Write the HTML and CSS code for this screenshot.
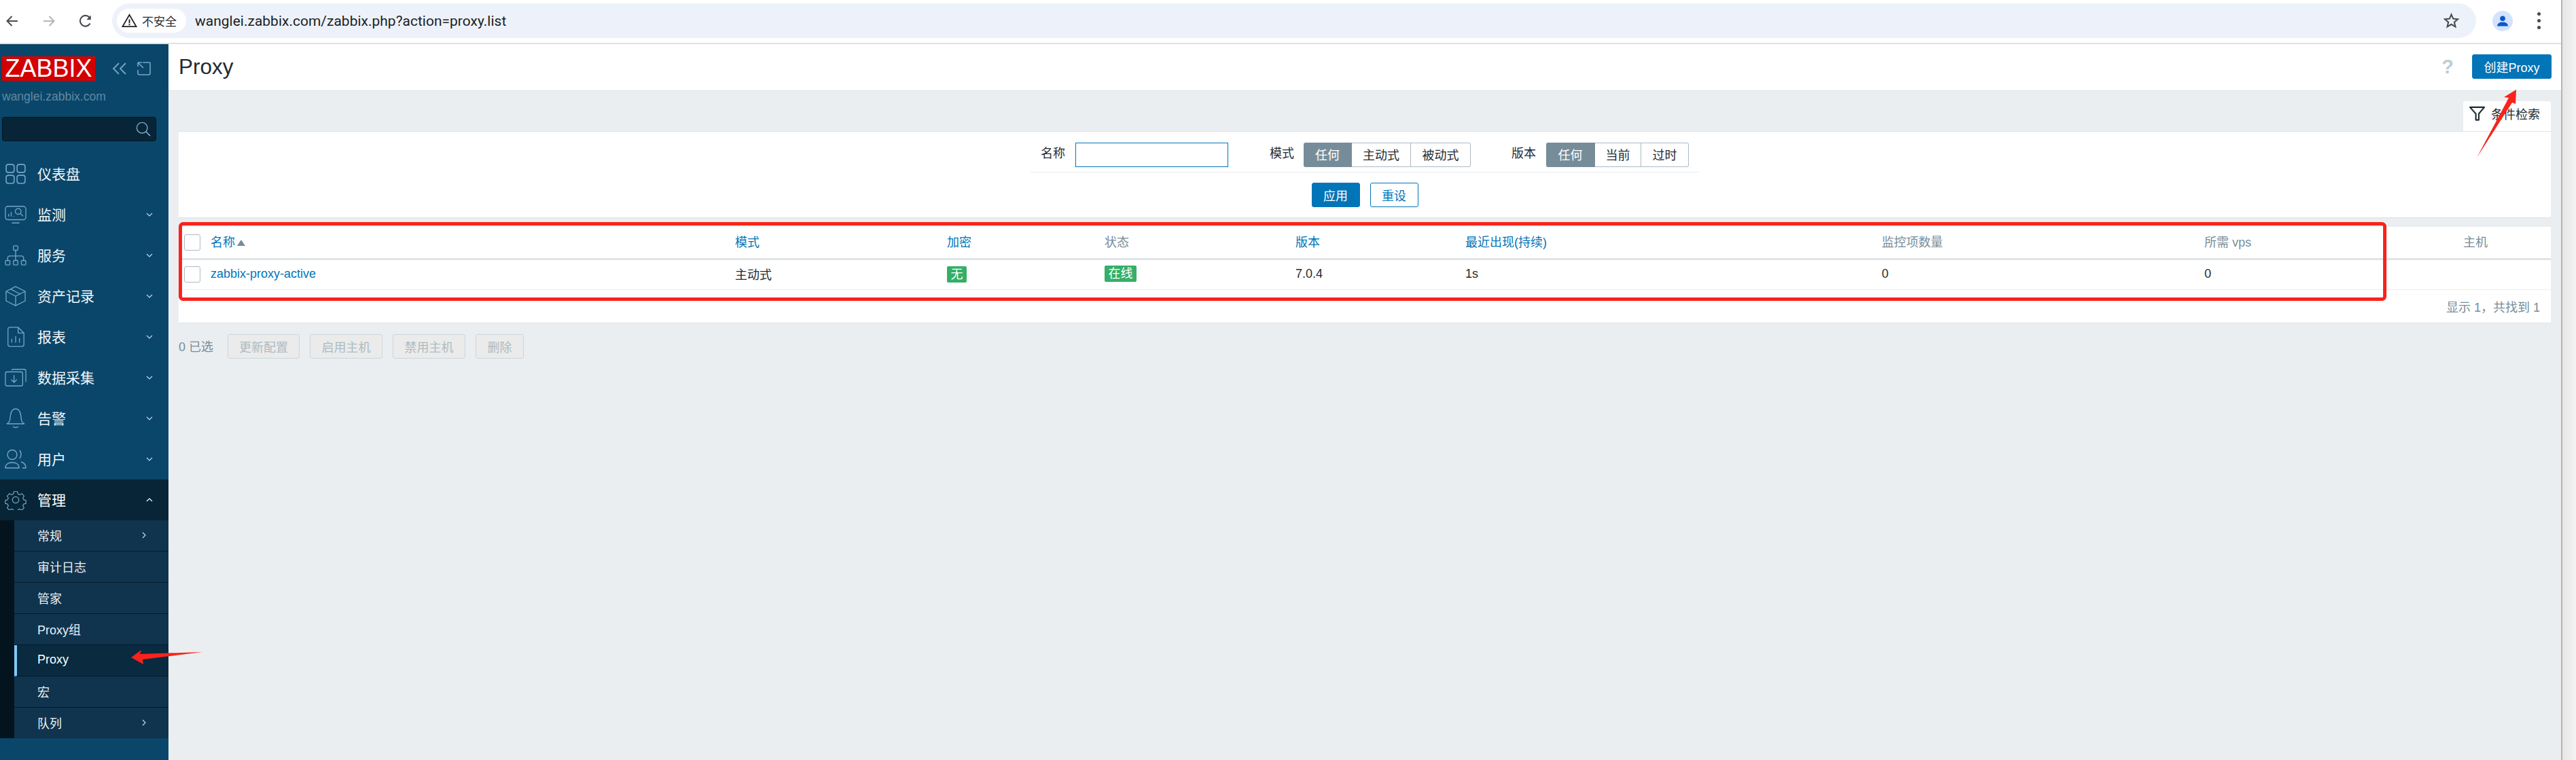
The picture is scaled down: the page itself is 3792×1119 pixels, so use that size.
FILE: index.html
```html
<!DOCTYPE html>
<html lang="zh">
<head>
<meta charset="utf-8">
<title>Proxy</title>
<link rel="stylesheet" href="styles.css">
</head>
<body>
<div class="window">
  <header class="toolbar">
    <svg class="tb-icon" viewBox="0 0 24 24"><path d="M20 12H5M11.5 5 4.5 12l7 7" fill="none" stroke="#484b4f" stroke-width="2"/></svg>
    <svg class="tb-icon tb-off" viewBox="0 0 24 24"><path d="M4 12h15M12.500 5l7 7-7 7" fill="none" stroke="#b3b5b7" stroke-width="2"/></svg>
    <svg class="tb-icon" viewBox="0 0 24 24"><path d="M18.600 15.500A7.800 7.800 0 1 1 17.500 6.500" fill="none" stroke="#484b4f" stroke-width="2.200"/><path d="M19.800 3.500v6.500h-6.500z" fill="#484b4f"/></svg>
    <div class="omnibox">
      <div class="chip">
        <svg class="warn" viewBox="0 0 24 24"><path d="M12 3 22.500 21h-21z" fill="none" stroke="#222" stroke-width="2"/><path d="M11 10h2v6h-2zM11 17h2v2h-2z" fill="#222"/></svg>
        <span>不安全</span>
      </div>
      <span class="url">wanglei.zabbix.com/zabbix.php?action=proxy.list</span>
      <svg class="star" viewBox="0 0 24 24"><path d="M12 3.200l2.600 6 6.500.6-4.900 4.300 1.500 6.400L12 17.100l-5.700 3.400 1.500-6.400-4.900-4.300 6.500-.6z" fill="none" stroke="#484b4f" stroke-width="2"/></svg>
    </div>
    <div class="avatar"><svg viewBox="0 0 24 24"><circle cx="12" cy="7.500" r="4.600" fill="#0b57d0"/><path d="M2.500 21c0-5 4.500-7.200 9.500-7.200s9.500 2.200 9.500 7.200z" fill="#0b57d0"/></svg></div>
    <div class="kebab"><i></i><i></i><i></i></div>
  </header>

  <div class="app">
    <aside class="sidebar">
      <div class="brand">
        <span class="logo">ZABBIX</span>
        <svg class="brand-a" viewBox="0 0 22 18"><path d="M10 1 2 9l8 8M20 1l-8 8 8 8" fill="none" stroke="#76a6c4" stroke-width="1.800"/></svg>
        <svg class="brand-b" viewBox="0 0 20 20"><path d="M8 1h10a1 1 0 0 1 1 1v15a2 2 0 0 1-2 2H3a2 2 0 0 1-2-2v-5M1 1l8 8M1 1v6M1 1h6" fill="none" stroke="#76a6c4" stroke-width="1.600"/></svg>
      </div>
      <div class="host">wanglei.zabbix.com</div>
      <div class="search">
        <svg viewBox="0 0 24 24"><circle cx="10" cy="10" r="8.500" fill="none" stroke="#76a6c4" stroke-width="1.600"/><path d="m16 16 7 7" stroke="#76a6c4" stroke-width="1.800"/></svg>
      </div>
      <nav class="menu">
        <a class="item"><span class="ic"><svg viewBox="0 0 28 28"><g fill="none" stroke="#76a6c4" stroke-width="1.500"><rect x="1" y="1" width="11" height="11" rx="3"/><rect x="16" y="1" width="11" height="11" rx="3"/><rect x="1" y="16" width="11" height="11" rx="3"/><rect x="16" y="16" width="11" height="11" rx="3"/></g></svg></span><span class="lbl">仪表盘</span></a>
        <a class="item"><span class="ic"><svg viewBox="0 0 34 28"><g fill="none" stroke="#76a6c4" stroke-width="1.400"><rect x="1" y="1" width="32" height="21" rx="4"/><path d="M11 27h12M6 17v-4M10 17v-7M14 17v-1"/><circle cx="21" cy="9" r="4.500"/><path d="m24.500 12.500 4 4"/></g></svg></span><span class="lbl">监测</span><svg class="chev" viewBox="0 0 10 6"><path d="m1 1 4 4 4-4" fill="none" stroke="#c5d9e6" stroke-width="1.200"/></svg></a>
        <a class="item"><span class="ic"><svg viewBox="0 0 34 32"><g fill="none" stroke="#76a6c4" stroke-width="1.400"><rect x="13.500" y="1" width="7" height="7" rx="1.500"/><rect x="1" y="24" width="7" height="7" rx="1.500"/><rect x="13.500" y="24" width="7" height="7" rx="1.500"/><rect x="26" y="24" width="7" height="7" rx="1.500"/><path d="M17 8v16M4.500 24v-4a3 3 0 0 1 3-3h19a3 3 0 0 1 3 3v4"/></g></svg></span><span class="lbl">服务</span><svg class="chev" viewBox="0 0 10 6"><path d="m1 1 4 4 4-4" fill="none" stroke="#c5d9e6" stroke-width="1.200"/></svg></a>
        <a class="item"><span class="ic"><svg viewBox="0 0 32 32"><g fill="none" stroke="#76a6c4" stroke-width="1.400" stroke-linejoin="round"><path d="M16 1 31 8.500v15L16 31 1 23.500v-15z"/><path d="M1 8.500 16 16l15-7.500M16 16v15M8 5l15 7.500"/></g></svg></span><span class="lbl">资产记录</span><svg class="chev" viewBox="0 0 10 6"><path d="m1 1 4 4 4-4" fill="none" stroke="#c5d9e6" stroke-width="1.200"/></svg></a>
        <a class="item"><span class="ic"><svg viewBox="0 0 28 32"><g fill="none" stroke="#76a6c4" stroke-width="1.400"><path d="M5 1h13l9 9v18a3 3 0 0 1-3 3H5a3 3 0 0 1-3-3V4a3 3 0 0 1 3-3zM18 1v9h9M8 25v-6M14 25V15M20 25v-7"/></g></svg></span><span class="lbl">报表</span><svg class="chev" viewBox="0 0 10 6"><path d="m1 1 4 4 4-4" fill="none" stroke="#c5d9e6" stroke-width="1.200"/></svg></a>
        <a class="item"><span class="ic"><svg viewBox="0 0 34 28"><g fill="none" stroke="#76a6c4" stroke-width="1.400"><rect x="1" y="5" width="27" height="22" rx="2.500"/><path d="M11 2.500q0-1.500 2-1.500h17q3 0 3 3v17M14.500 10v11M10 17l4.500 4.500L19 17"/></g></svg></span><span class="lbl">数据采集</span><svg class="chev" viewBox="0 0 10 6"><path d="m1 1 4 4 4-4" fill="none" stroke="#c5d9e6" stroke-width="1.200"/></svg></a>
        <a class="item"><span class="ic"><svg viewBox="0 0 28 30"><g fill="none" stroke="#76a6c4" stroke-width="1.400"><path d="M1 23q4-2 4.500-6l1-7C7.500 4 10 1 14 1s6.500 3 7.500 9l1 7q.5 4 4.500 6zM10 27q4 3 8 0"/></g></svg></span><span class="lbl">告警</span><svg class="chev" viewBox="0 0 10 6"><path d="m1 1 4 4 4-4" fill="none" stroke="#c5d9e6" stroke-width="1.200"/></svg></a>
        <a class="item"><span class="ic"><svg viewBox="0 0 32 30"><g fill="none" stroke="#76a6c4" stroke-width="1.400"><circle cx="11" cy="8.500" r="7"/><path d="M1 28c0-5 4-8 10-8s10 3 10 8zM22 2q4 6 0 12M24 19q7 2 7 9h-5"/></g></svg></span><span class="lbl">用户</span><svg class="chev" viewBox="0 0 10 6"><path d="m1 1 4 4 4-4" fill="none" stroke="#c5d9e6" stroke-width="1.200"/></svg></a>
        <a class="item item-open"><span class="ic"><svg viewBox="0 0 32 32"><g fill="none" stroke="#76a6c4" stroke-width="1.400" stroke-linejoin="round"><circle cx="16" cy="16" r="5"/><path d="M13 1.500h6l1 4 3 1.500 3.700-2 4 4.300-2 3.500 1.300 3 4 1v5.500l-4 1-1.300 3 2 3.600-4 4-3.700-2-3 1.300-1 3.800h-6l-1-3.800-3-1.300-3.700 2-4-4 2-3.600-1.300-3-4-1v-5.500l4-1 1.300-3-2-3.500 4-4.300 3.700 2 3-1.500z" transform="translate(1.600 1.600) scale(.9)"/></g></svg></span><span class="lbl">管理</span><svg class="chev" viewBox="0 0 10 6"><path d="m1 5 4-4 4 4" fill="none" stroke="#fff" stroke-width="1.200"/></svg></a>
      </nav>
      <div class="sub-wrap">
        <ul class="sub">
          <li class="sub-item">常规<svg class="chev-r" viewBox="0 0 6 10"><path d="m1 1 4 4-4 4" fill="none" stroke="#c5d9e6" stroke-width="1.200"/></svg></li>
          <li class="sub-item">审计日志</li>
          <li class="sub-item">管家</li>
          <li class="sub-item">Proxy组</li>
          <li class="sub-item sub-active">Proxy</li>
          <li class="sub-item">宏</li>
          <li class="sub-item">队列<svg class="chev-r" viewBox="0 0 6 10"><path d="m1 1 4 4-4 4" fill="none" stroke="#c5d9e6" stroke-width="1.200"/></svg></li>
        </ul>
      </div>
    </aside>

    <main class="main">
      <div class="page-head">
        <h1>Proxy</h1>
        <span class="help">?</span>
        <button class="btn btn-primary btn-create">创建Proxy</button>
      </div>
      <div class="content">
        <div class="tab-row">
          <div class="filter-tab">
            <svg viewBox="0 0 26 24"><path d="M2 2h22l-8.500 10v9.500h-4.500V12z" fill="none" stroke="#1f2c33" stroke-width="2.200" stroke-linejoin="round"/></svg>
            <span>条件检索</span>
          </div>
        </div>
        <section class="filter">
          <div class="filter-row">
            <label class="f-label f-name">名称</label>
            <span class="f-input"></span>
            <label class="f-label f-mode">模式</label>
            <div class="seg"><span class="seg-on w71">任何</span><span class="w87">主动式</span><span class="w88">被动式</span></div>
            <label class="f-label f-ver">版本</label>
            <div class="seg"><span class="seg-on w72">任何</span><span class="w68">当前</span><span class="w70">过时</span></div>
          </div>
          <div class="filter-actions">
            <button class="btn btn-primary btn-apply">应用</button>
            <button class="btn btn-outline btn-apply">重设</button>
          </div>
        </section>

        <section class="list">
          <table>
            <colgroup>
              <col class="c0"><col class="c1"><col class="c2"><col class="c3"><col class="c4"><col class="c5"><col class="c6"><col class="c7"><col class="c8"><col class="c9">
            </colgroup>
            <thead>
              <tr>
                <th class="cell-check"><span class="check"></span></th>
                <th><a>名称</a><i class="sort"></i></th>
                <th><a>模式</a></th>
                <th><a>加密</a></th>
                <th>状态</th>
                <th><a>版本</a></th>
                <th><a>最近出现(持续)</a></th>
                <th>监控项数量</th>
                <th>所需 vps</th>
                <th>主机</th>
              </tr>
            </thead>
            <tbody>
              <tr>
                <td class="cell-check"><span class="check"></span></td>
                <td><a>zabbix-proxy-active</a></td>
                <td>主动式</td>
                <td><span class="badge">无</span></td>
                <td><span class="badge badge-up">在线</span></td>
                <td>7.0.4</td>
                <td>1s</td>
                <td>0</td>
                <td>0</td>
                <td></td>
              </tr>
            </tbody>
          </table>
          <div class="list-foot">显示 1，共找到 1</div>
        </section>

        <div class="actions">
          <span class="selected">0 已选</span>
          <button class="btn-off w106">更新配置</button>
          <button class="btn-off w107">启用主机</button>
          <button class="btn-off w107">禁用主机</button>
          <button class="btn-off w71b">删除</button>
        </div>
      </div>
    </main>
  </div>
</div>
<div class="scrollbar"></div>

<svg class="annot" viewBox="0 0 3792 1119">
  <rect x="265.500" y="329.500" width="3245" height="111" rx="4" fill="none" stroke="#f8231b" stroke-width="5"/>
  <path d="M193 968 208 957 206 963 298 960 210 971 211 978z" fill="#f8231b"/>
  <path d="M3704 132 3686 143 3693 144 3646 232 3698 151 3703 153z" fill="#f8231b"/>
</svg>
</body>
</html>
```

FILE: styles.css
```css
* { box-sizing: border-box; }
html, body { margin: 0; height: 100%; }
body {
  display: flex;
  width: 3792px;
  height: 1119px;
  overflow: hidden;
  font-family: "Liberation Sans", "Noto Sans CJK SC", sans-serif;
  font-size: 18px;
  color: #1f2c33;
  background: #fff;
}
.window { width: 3770px; display: flex; flex-direction: column; height: 1119px; }
.scrollbar { width: 22px; border-left: 2px solid #b4b4b4; background: linear-gradient(90deg, #e6e6e6, #f3f3f3); }

/* browser toolbar */
.toolbar {
  height: 65px;
  flex: none;
  display: flex;
  align-items: center;
  padding: 0 0 2px 0;
  background: #fff;
  border-bottom: 2px solid #e2e2e2;
}
.tb-icon { width: 24px; height: 24px; margin-left: 6px; margin-right: 24px; flex: none; }
.tb-off { margin-left: 6px; }
.omnibox {
  margin-left: 3px;
  width: 3480px;
  height: 51px;
  border-radius: 26px;
  background: #edf2fa;
  display: flex;
  align-items: center;
  padding-left: 7px;
  flex: none;
}
.chip {
  width: 102px;
  height: 35px;
  border-radius: 18px;
  background: #fff;
  display: flex;
  align-items: center;
  gap: 7px;
  padding-left: 7px;
  font-size: 17px;
  flex: none;
}
.warn { width: 23px; height: 23px; flex: none; }
.url {
  margin-left: 13px;
  font-family: Roboto, "Liberation Sans", sans-serif;
  font-size: 21px;
  color: #1f1f1f;
  flex: 1;
}
.star { width: 25px; height: 25px; margin-right: 24px; flex: none; }
.avatar {
  width: 30px; height: 30px; border-radius: 50%;
  background: #d3e3fd;
  margin-left: 24px;
  display: flex; align-items: center; justify-content: center;
  flex: none;
}
.avatar svg { width: 20px; height: 20px; }
.kebab { margin-left: 36px; display: flex; flex-direction: column; gap: 5px; }
.kebab i { display: block; width: 5px; height: 5px; border-radius: 50%; background: #484b4f; }

/* app */
.app { flex: 1; display: flex; min-height: 0; }
.sidebar { width: 248px; flex: none; background: #0a466a; display: flex; flex-direction: column; }
.brand { display: flex; align-items: center; padding: 18px 0 0 3px; height: 54px; }
.logo {
  width: 137px; height: 36px;
  background: #d40000;
  color: #fff;
  font-size: 36px;
  line-height: 36px;
  text-align: center;
  flex: none;
}
.brand-a { width: 22px; height: 18px; margin-left: 25px; }
.brand-b { width: 20px; height: 20px; margin-left: 15px; }
.host { margin: 12px 0 0 3px; font-size: 17.500px; line-height: 22px; color: #62899f; height: 22px; }
.search {
  margin: 19px 0 0 3px;
  width: 227px; height: 36px;
  background: #072537;
  border: 1px solid #041623;
  border-radius: 4px;
  display: flex; align-items: center; justify-content: flex-end;
  padding-right: 7px;
}
.search svg { width: 22px; height: 22px; }
.menu { margin-top: 18px; }
.item { display: flex; align-items: center; height: 60px; color: #f2f7fa; font-size: 21px; position: relative; }
.ic { width: 46px; margin-left: 0; flex: none; display: flex; justify-content: center; }
.ic svg { width: 32px; height: 30px; }
.lbl { margin-left: 9px; flex: 1; padding-bottom: 2px; }
.chev { width: 10px; height: 6px; margin-right: 23px; flex: none; }
.item-open { background: #072537; color: #fff; }
.sub-wrap { background: #04141f; padding-left: 21px; }
.sub { list-style: none; margin: 0; padding: 0; }
.sub-item {
  height: 46px;
  background: #10344e;
  border-bottom: 1px solid #05192a;
  padding-left: 34px;
  padding-bottom: 2px;
  display: flex; align-items: center; justify-content: space-between;
  color: #e8eff4;
  font-size: 18px;
}
.sub-item:last-child { height: 45px; border-bottom: 0; }
.sub-active { background: #0a2a40; border-left: 4px solid #7ccbf8; padding-left: 30px; color: #fff; }
.chev-r { width: 6px; height: 10px; margin-right: 33px; }

/* main */
.main { flex: 1; min-width: 0; background: #ebeef0; display: flex; flex-direction: column; }
.page-head {
  height: 69px; flex: none;
  background: #fff;
  border-bottom: 1px solid #dfe4e7;
  display: flex; align-items: center;
  padding: 0 14px 2px 15px;
}
.page-head h1 { margin: 0; font-size: 31.500px; font-weight: 400; flex: 1; color: #1f2c33; }
.help { font-size: 29px; font-weight: 700; color: #c0ccd3; margin-right: 27px; }
.btn { height: 36px; border-radius: 3px; font: inherit; font-size: 18px; padding: 0; cursor: pointer; }
.btn-primary { background: #0275b8; border: 1px solid #0275b8; color: #fff; }
.btn-outline { background: #fff; border: 1px solid #0275b8; color: #0275b8; }
.btn-create { width: 117px; }
.btn-apply { width: 71px; }

.content { padding: 15px 15px 0; }
.tab-row { display: flex; justify-content: flex-end; }
.filter-tab {
  width: 129px; height: 44px;
  background: #fff;
  border-radius: 3px 3px 0 0;
  display: flex; align-items: center;
  padding: 0 0 8px 8px;
  gap: 8px;
  font-size: 18px;
  white-space: nowrap;
}
.filter-tab svg { width: 25px; height: 23px; flex: none; }
.filter { background: #fff; border-bottom: 1px solid #dfe4e7; border-top: 1px solid #dfe4e7; height: 128px; padding-top: 16px; display: flex; flex-direction: column; align-items: center; }
.filter-row {
  width: 984px;
  height: 44px;
  border-bottom: 1px solid #ebeef0;
  display: flex;
  align-items: flex-start;
  padding-left: 15px;
}
.f-label { line-height: 33px; width: 51px; }
.f-mode { margin-left: 61px; width: 50px; }
.f-ver { margin-left: 60px; }
.f-input { width: 225px; height: 36px; border: 1px solid #0275b8; background: #fff; }
.seg { display: flex; height: 36px; }
.seg span {
  display: flex; align-items: center; justify-content: center;
  border: 1px solid #acbbc2;
  border-left: 0;
  background: #fff;
  height: 36px;
  padding-bottom: 2px;
}
.seg span:last-child { border-radius: 0 3px 3px 0; }
.seg .seg-on { background: #768d99; border-color: #768d99; color: #fff; border-radius: 3px 0 0 3px; }
.w71 { width: 71px; } .w72 { width: 72px; } .w87 { width: 87px; } .w88 { width: 88px; } .w68 { width: 68px; } .w70 { width: 70px; }
.filter-actions { display: flex; gap: 15px; margin-top: 15px; }

.list { margin-top: 13px; background: #fff; border-bottom: 1px solid #dfe4e7; height: 142px; }
table { width: 3492px; border-collapse: collapse; table-layout: fixed; }
.c0 { width: 47px; } .c1 { width: 772px; } .c2 { width: 312px; } .c3 { width: 232px; } .c4 { width: 281px; }
.c5 { width: 250px; } .c6 { width: 613px; } .c7 { width: 475px; } .c8 { width: 381px; } .c9 { width: 129px; }
th { height: 47px; padding: 0 0 3px; border-bottom: 3px solid #dfe4e7; text-align: left; font-weight: 400; color: #768d99; }
td { height: 45px; padding: 0 0 2px; border-bottom: 1px solid #ebeef0; }
a { color: #0275b8; text-decoration: none; }
.cell-check { padding-left: 8px; padding-bottom: 0; }
.check { display: block; width: 24px; height: 24px; border: 1px solid #acbbc2; border-radius: 3px; background: #fff; }
.sort { display: inline-block; margin-left: 3px; width: 0; height: 0; border: 6px solid transparent; border-top: 0; border-bottom: 9px solid #768d99; vertical-align: 1px; }
.badge { display: inline-block; width: 29px; height: 24px; line-height: 24px; text-align: center; background: #34af67; color: #fff; border-radius: 2px; vertical-align: middle; margin-top: 2px; }
.badge-up { width: 47px; margin-top: 0; }
.list-foot { text-align: right; padding: 16px 16px 0 0; color: #768d99; line-height: 20px; }

.actions { display: flex; align-items: center; margin-top: 16px; height: 36px; }
.selected { width: 72px; color: #768d99; padding-bottom: 2px; }
.btn-off {
  height: 36px;
  margin-right: 15px;
  background: #ebebeb;
  border: 1px solid #ccd5da;
  border-radius: 3px;
  color: #acbbc2;
  font: inherit;
  padding: 0;
}
.w106 { width: 106px; } .w107 { width: 107px; } .w71b { width: 71px; }

.annot { position: absolute; left: 0; top: 0; width: 3792px; height: 1119px; pointer-events: none; }
```
